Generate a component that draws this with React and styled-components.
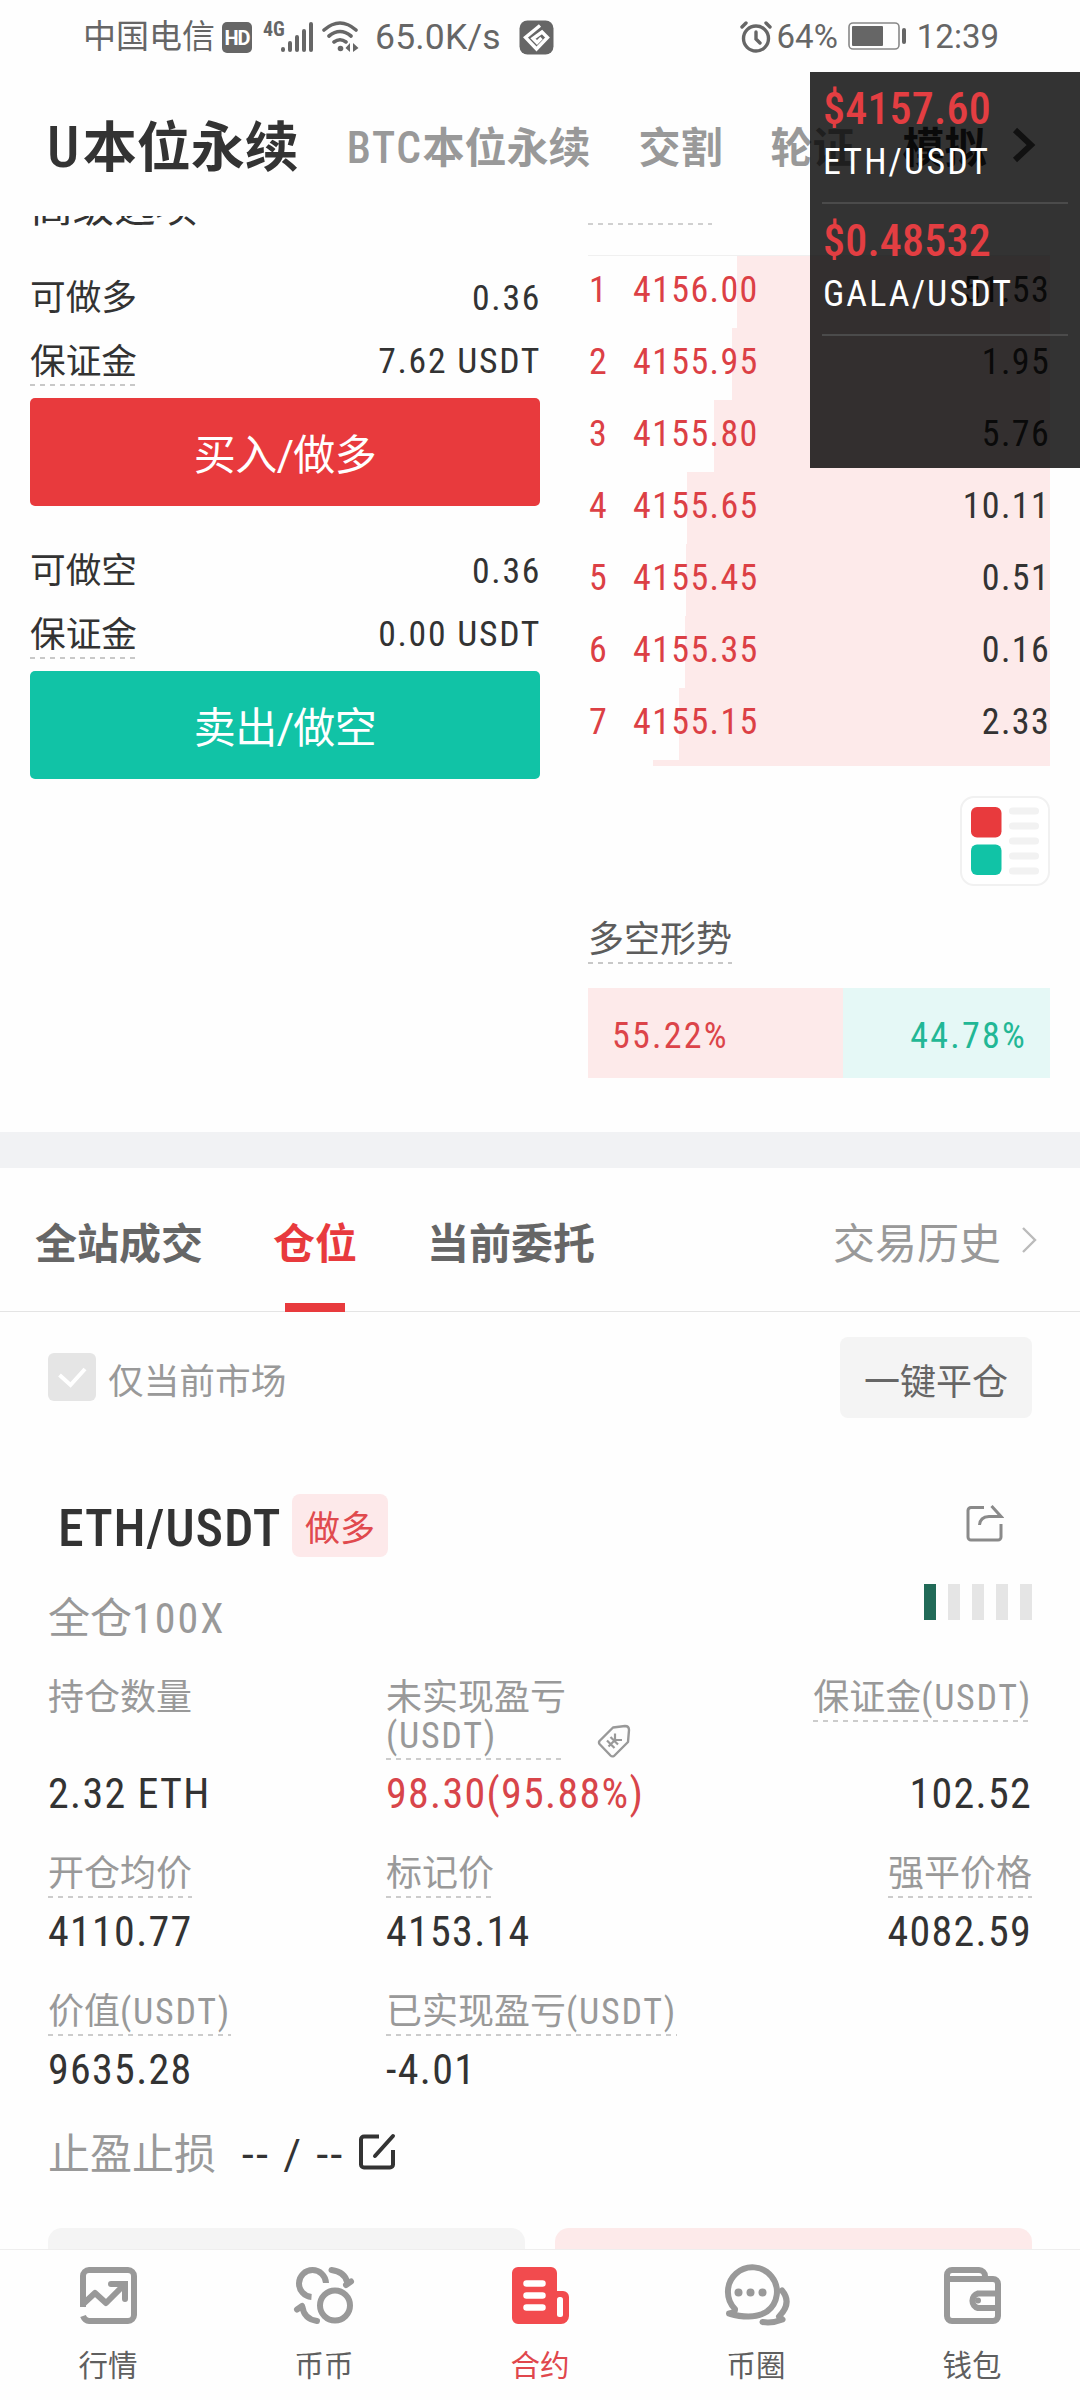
import React from 'react';
import styled, { createGlobalStyle } from 'styled-components';

const RED = '#e83a3d';
const GREEN = '#11c3a6';
const INK = '#333333';

const Global = createGlobalStyle`
  * { box-sizing: border-box; }
  body {
    margin: 0;
    background: #fefefe;
    font-family: Roboto, 'Noto Sans CJK SC', sans-serif;
    color: ${INK};
  }
`;

const Screen = styled.div`
  position: relative;
  width: 1080px;
  height: 2400px;
  overflow: hidden;
  display: flex;
  flex-direction: column;
  background: #fefefe;
`;

/* status bar */
const StatusBar = styled.header`
  height: 72px;
  flex: none;
  display: flex;
  align-items: center;
  justify-content: space-between;
  padding: 2px 81px 0 83px;
  color: #666;
`;
const StatusGroup = styled.div`
  display: flex;
  align-items: center;
`;
const StatusText = styled.span`
  font-size: ${p => p.$size}px;
  line-height: 40px;
  white-space: nowrap;
  margin-left: ${p => p.$ml || 0}px;
  letter-spacing: ${p => p.$ls || 0}px;
`;
const StatusIcon = styled.svg`
  flex: none;
  display: block;
  margin-left: ${p => p.$ml || 0}px;
  margin-bottom: ${p => p.$mb || 0}px;
`;
const HdBadge = styled.span`
  width: 30px;
  height: 31px;
  margin-left: 7px;
  border-radius: 5px;
  background: #666;
  color: #fff;
  font-size: 20px;
  font-weight: 700;
  line-height: 32px;
  text-align: center;
  letter-spacing: -1px;
`;
const NetLabel = styled.span`
  font-size: 20px;
  font-weight: 700;
  font-stretch: 75%;
  line-height: 16px;
  height: 32px;
  margin-left: 11px;
  width: 18px;
`;

/* market type tabs */
const MarketTabs = styled.nav`
  height: 144px;
  flex: none;
  display: flex;
  align-items: center;
  gap: 48px;
  padding: 9px 46px 0 47px;
`;
const MarketTab = styled.span`
  font-size: ${p => (p.$large ? 54 : 42)}px;
  line-height: 60px;
  font-weight: 700;
  white-space: nowrap;
  color: ${p => (p.$dark ? INK : '#999')};
`;
const Latin = styled.span`
  font-weight: 500;
  font-stretch: 75%;
  font-size: ${p => p.$size}px;
  letter-spacing: ${p => p.$ls || 0}px;
`;

/* trade area */
const Trade = styled.section`
  height: 916px;
  flex: none;
  display: flex;
  justify-content: space-between;
  padding: 0 30px;
  overflow: hidden;
`;
const OrderForm = styled.div`
  width: 510px;
  display: flex;
  flex-direction: column;
`;
const AdvancedLabel = styled.div`
  margin-top: -29px;
  padding-left: 1px;
  height: 79px;
  font-size: 41.5px;
  line-height: 42px;
`;
const FormRow = styled.div`
  height: 63px;
  display: flex;
  align-items: center;
  justify-content: space-between;
  font-size: 35.7px;
  line-height: 52px;
`;
const Num = styled.span`
  font-weight: 400;
  font-stretch: 75%;
  letter-spacing: 0.048em;
  margin-right: ${p => (p.$inline ? 0 : '-0.03em')};
`;
const Dashed = styled.span`
  height: 50px;
  white-space: nowrap;
  background: repeating-linear-gradient(to right, #c8c8c8 0 5px, transparent 5px 10px) left bottom / 100% 2px no-repeat;
`;
const TradeButton = styled.button`
  width: 510px;
  height: 108px;
  margin: 6px 0 ${p => p.$mb || 0}px;
  padding: 0;
  border: 0;
  border-radius: 5px;
  background: ${p => p.$bg};
  color: #fff;
  font: inherit;
  font-size: 42px;
  letter-spacing: -0.6px;
  line-height: 116px;
`;

const Book = styled.div`
  width: 462px;
  display: flex;
  flex-direction: column;
`;
const BookHead = styled.div`
  height: 40px;
  border-bottom: 1px solid #f0f0f0;
`;
const HeadDash = styled.div`
  width: 124px;
  height: 9px;
  background: repeating-linear-gradient(to right, #d0d0d0 0 5px, transparent 5px 10px) left bottom / 100% 2px no-repeat;
`;
const BookRow = styled.div`
  height: 72px;
  display: flex;
  align-items: center;
  padding: 0 1px 4px 1px;
  font-size: 36px;
  font-weight: 400;
  font-stretch: 75%;
  letter-spacing: 0.038em;
  background: linear-gradient(#fdeaea, #fdeaea) right / ${p => p.$depth}px 100% no-repeat;
`;
const BookIndex = styled.span`
  width: 44px;
  color: #dc4045;
`;
const BookPrice = styled.span`
  flex: 1;
  color: #dc4045;
`;
const BookAmount = styled.span`
  margin-right: -0.03em;
`;
const BookTail = styled.div`
  width: 397px;
  height: 6px;
  align-self: flex-end;
  background: #fdeaea;
`;
const DepthSwitch = styled.svg`
  display: block;
  align-self: flex-end;
  margin-top: 30px;
`;
const TrendLabel = styled.div`
  height: 102px;
  display: flex;
  padding-top: 28px;
  font-size: 36px;
  line-height: 53px;
  color: #5c5c5c;
`;
const TrendBar = styled.div`
  height: 90px;
  display: flex;
  font-size: 36px;
  line-height: 96px;
`;
const TrendPart = styled.div`
  width: ${p => p.$w}px;
  padding: 0 23px 0 24px;
  text-align: ${p => p.$align};
  color: ${p => p.$color};
  background: ${p => p.$bg};
  font-weight: 400;
  font-stretch: 75%;
  letter-spacing: 0.062em;
`;

const Band = styled.div`
  height: 36px;
  flex: none;
  background: #f1f2f4;
`;

/* position section */
const PanelTabs = styled.nav`
  height: 144px;
  flex: none;
  display: flex;
  gap: 70px;
  padding: 0 43px 0 35px;
  border-bottom: 1px solid #e4e4e4;
`;
const PanelTab = styled.span`
  position: relative;
  font-size: 42px;
  font-weight: 700;
  line-height: 153px;
  height: 144px;
  color: ${p => (p.$active ? RED : '#666')};
  &::after {
    content: '';
    display: ${p => (p.$active ? 'block' : 'none')};
    position: absolute;
    left: 12px;
    bottom: 0;
    width: 60px;
    height: 9px;
    background: ${RED};
  }
`;
const HistoryLink = styled.span`
  margin-left: auto;
  display: flex;
  align-items: center;
  gap: 20px;
  height: 144px;
  font-size: 42px;
  color: #999;
`;
const HistoryText = styled.span`
  padding-top: 9px;
  line-height: 50px;
`;
const FilterRow = styled.div`
  height: 131px;
  flex: none;
  display: flex;
  align-items: center;
  padding: 0 48px;
`;
const CheckBox = styled.svg`
  display: block;
  margin-bottom: 2px;
`;
const FilterLabel = styled.span`
  flex: 1;
  margin-left: 12px;
  padding-top: 8px;
  font-size: 35.7px;
  line-height: 48px;
  color: #999;
`;
const CloseAll = styled.button`
  width: 192px;
  height: 81px;
  padding: 2px 0 0;
  border: 0;
  border-radius: 8px;
  background: #f4f4f4;
  color: #666;
  font: inherit;
  font-size: 36px;
`;
const PositionHead = styled.div`
  height: 116px;
  flex: none;
  display: flex;
  align-items: center;
  padding: 49px 76px 0 58px;
`;
const Pair = styled.span`
  width: 223px;
  padding-top: 6px;
  font-size: 52px;
  font-weight: 500;
  line-height: 60px;
  font-stretch: 75%;
  letter-spacing: 0.8px;
`;
const Side = styled.span`
  width: 96px;
  height: 63px;
  margin-left: 11px;
  border-radius: 8px;
  background: #fde9ea;
  color: #e04a4e;
  font-size: 35px;
  line-height: 71px;
  text-align: center;
`;
const ShareIcon = styled.svg`
  display: block;
  margin: -3px 0 0 auto;
`;
const LeverageRow = styled.div`
  height: 116px;
  flex: none;
  display: flex;
  justify-content: space-between;
  padding: 25px 48px 0;
  font-size: 42px;
  line-height: 69px;
  color: #999;
  white-space: nowrap;
`;
const Risk = styled.div`
  display: flex;
  gap: 12px;
`;
const RiskBar = styled.span`
  width: 12px;
  height: 36px;
  background: ${p => (p.$on ? '#216a57' : '#e5e5e5')};
`;
const Stats = styled.div`
  height: 444px;
  flex: none;
  display: grid;
  grid-template-columns: 338px 1fr auto;
  grid-template-rows: 176px 138px 130px;
  padding: 0 48px;
`;
const Stat = styled.div`
  display: flex;
  flex-direction: column;
  align-items: ${p => (p.$right ? 'flex-end' : 'flex-start')};
`;
const StatLabel = styled.span`
  display: block;
  height: ${p => (p.$two ? 85 : 47)}px;
  padding-top: 4px;
  font-size: 36px;
  line-height: 38px;
  color: #999;
  white-space: pre;
  background: ${p =>
    p.$plain
      ? 'none'
      : 'repeating-linear-gradient(to right, #ccc 0 5px, transparent 5px 10px) left bottom / 100% 2px no-repeat'};
`;
const StatValue = styled.span`
  margin-top: ${p => p.$mt || 11}px;
  font-size: 42px;
  line-height: 46px;
  white-space: nowrap;
  color: ${p => p.$color || INK};
  font-weight: 400;
  font-stretch: 75%;
  letter-spacing: 0.031em;
`;
const LabelLine = styled.div`
  display: flex;
  align-items: flex-end;
  gap: 31px;
`;
const StopRow = styled.div`
  height: 109px;
  flex: none;
  display: flex;
  align-items: center;
  padding: 0 48px 38px;
  font-size: 42px;
  line-height: 50px;
  color: #999;
`;
const StopValue = styled.span`
  width: 105px;
  margin: 0 11px 0 26px;
  color: ${INK};
  letter-spacing: 2.6px;
  white-space: nowrap;
`;
const Actions = styled.div`
  height: 21px;
  flex: none;
  display: flex;
  gap: 30px;
  padding: 0 48px;
`;
const Action = styled.div`
  flex: 1;
  border-radius: 14px 14px 0 0;
  background: ${p => p.$bg};
`;

/* bottom bar */
const TabBar = styled.nav`
  flex: 1;
  display: grid;
  grid-template-columns: repeat(5, 1fr);
  border-top: 1px solid #eee;
  background: #fefefe;
`;
const TabItem = styled.div`
  display: flex;
  flex-direction: column;
  align-items: center;
  padding-top: 15px;
  font-size: 29.5px;
  line-height: 36px;
  color: ${p => (p.$active ? '#e0474c' : '#5f5f5f')};
`;
const TabIcon = styled.svg`
  display: block;
  margin-bottom: 23px;
  overflow: visible;
`;

/* floating ticker */
const Ticker = styled.aside`
  position: absolute;
  left: 810px;
  top: 72px;
  width: 270px;
  height: 396px;
  padding: 0 12px;
  background: rgba(0, 0, 0, 0.8);
`;
const TickerItem = styled.div`
  height: 132px;
  padding: 14px 1px 0;
  border-bottom: 2px solid #4b4b4b;
  display: flex;
  flex-direction: column;
`;
const TickerPrice = styled.span`
  color: #e33e42;
  font-size: 44px;
  font-weight: 500;
  line-height: 46px;
  font-stretch: 75%;
  letter-spacing: 0.2px;
`;
const TickerName = styled.span`
  margin-top: 8px;
  color: #fff;
  font-size: 36px;
  line-height: 44px;
  font-stretch: 75%;
  letter-spacing: 2.1px;
`;

const asks = [
  ['4156.00', '51.53', 313],
  ['4155.95', '1.95', 318.5],
  ['4155.80', '5.76', 336],
  ['4155.65', '10.11', 363],
  ['4155.45', '0.51', 364],
  ['4155.35', '0.16', 365],
  ['4155.15', '2.33', 371],
];

function MarketIcon() {
  return (
    <TabIcon width="60" height="60" viewBox="0 0 60 60" fill="none" stroke="#999" strokeWidth="6">
      <path d="M5 42V11a6 6 0 0 1 6-6H50a6 6 0 0 1 6 6V50a6 6 0 0 1-6 6H11q-4 0-6-5" />
      <path d="M4 40L17 28L28 38L46 20" strokeLinejoin="round" />
      <path d="M33 19H47V34" strokeLinecap="round" />
    </TabIcon>
  );
}
function CoinIcon() {
  return (
    <TabIcon width="60" height="60" viewBox="0 0 60 60" fill="none" stroke="#999" strokeWidth="6">
      <circle cx="41" cy="40.500" r="15" />
      <path d="M32 18A13.500 13.500 0 1 0 17.500 32" />
      <path d="M37.500 5Q51 7 53 17" strokeLinecap="round" />
      <path d="M52 20L57 16.500" strokeLinecap="round" />
      <path d="M23 56Q10 54 8.500 42" strokeLinecap="round" />
      <path d="M8 41L3 44.500" strokeLinecap="round" />
    </TabIcon>
  );
}
function ContractIcon() {
  return (
    <TabIcon width="60" height="60" viewBox="0 0 60 60">
      <path fill="#f24b4e" d="M8 2H41a6 6 0 0 1 6 6V26h6a6 6 0 0 1 6 6V51a8 8 0 0 1-8 8H8a6 6 0 0 1-6-6V8a6 6 0 0 1 6-6Z" />
      <g stroke="#fff" strokeLinecap="round" strokeWidth="6.500">
        <path d="M16.500 18.500H32.500M16.500 30.500H32.500M16.500 42.500H32.500" />
      </g>
      <rect x="47" y="32" width="6" height="20" rx="2.500" fill="#fff" />
    </TabIcon>
  );
}
function CircleIcon() {
  return (
    <TabIcon width="66" height="60" viewBox="0 0 66 60" fill="none" stroke="#999" strokeWidth="6" strokeLinecap="round" strokeLinejoin="round">
      <path d="M6 48.500Q12.500 47.500 12 44A24.500 24.500 0 1 1 44 46.500Q30.500 55.500 6 48.500" />
      <g fill="#999" stroke="none">
        <circle cx="15.500" cy="27.500" r="4" />
        <circle cx="27.500" cy="27.500" r="4" />
        <circle cx="39.500" cy="27.500" r="4" />
      </g>
      <path d="M59 25.500Q69.500 38 56 51.500L59.500 54.500Q49.500 58.500 39.500 57" />
    </TabIcon>
  );
}
function WalletIcon() {
  return (
    <TabIcon width="60" height="60" viewBox="0 0 60 60" fill="none" stroke="#999" strokeWidth="6">
      <path d="M5 14V51a5 5 0 0 0 5 5H51a5 5 0 0 0 5-5V19a5 5 0 0 0-5-5ZM5 14V10a5 5 0 0 1 5-5H37a6 6 0 0 1 6 6V14" />
      <path d="M56 28.500H36a7.500 7.500 0 0 0 0 14.500H56" />
      <circle cx="36" cy="35.500" r="3" fill="#999" stroke="none" />
    </TabIcon>
  );
}

const tabs = [
  ['行情', MarketIcon],
  ['币币', CoinIcon],
  ['合约', ContractIcon],
  ['币圈', CircleIcon],
  ['钱包', WalletIcon],
];

export default function App() {
  return (
    <>
      <Global />
      <Screen>
        <StatusBar>
          <StatusGroup>
            <StatusText $size={33}>中国电信</StatusText>
            <HdBadge>HD</HdBadge>
            <NetLabel>4G</NetLabel>
            <StatusIcon width="33" height="32" viewBox="0 0 33 32" stroke="#666" strokeWidth="4" strokeLinecap="round">
              <path d="M2 28V29M9 22V29M16 16V29M23 10V29M30 3V29" />
            </StatusIcon>
            <StatusIcon $ml={8} width="38" height="32" viewBox="0 0 38 32" fill="none" stroke="#666" strokeWidth="3.600" strokeLinecap="round">
              <path d="M2 9Q18 -5 34 9M7 15Q18 6 29 15M12 21Q18 16.500 24 21" />
              <circle cx="18.500" cy="27.500" r="2.800" fill="#666" stroke="none" />
              <path d="M28 22V31L23.500 27ZM31 31V22L36.500 27Z" fill="#666" stroke="none" />
            </StatusIcon>
            <StatusText $size={35.5} $ml={15} $ls={0.2}>65.0K/s</StatusText>
            <StatusIcon $ml={18} width="35" height="35" viewBox="0 0 35 35">
              <rect x="0.500" y="0.500" width="34" height="34" rx="8" fill="#666" />
              <path d="M21 5.500L6.500 17.500L17.500 29L28.500 17.500L23 12L14 18.500L18 22.500L22.500 18" fill="none" stroke="#fff" strokeWidth="3.400" />
            </StatusIcon>
          </StatusGroup>
          <StatusGroup>
            <StatusIcon width="32" height="32" viewBox="0 0 32 32" fill="none" stroke="#666" strokeWidth="3.400" strokeLinecap="round">
              <circle cx="16" cy="17.500" r="12.500" />
              <path d="M2 6L6 2M30 6L26 2M16 11V18L20 22" />
            </StatusIcon>
            <StatusText $size={33} $ml={5}>64%</StatusText>
            <StatusIcon $ml={10} width="59" height="30" viewBox="0 0 59 30">
              <rect x="1" y="1" width="50" height="26" rx="4" fill="none" stroke="#888" strokeWidth="1.600" />
              <rect x="4" y="4" width="31" height="20" rx="1" fill="#666" />
              <rect x="54" y="6" width="4" height="16" rx="2" fill="#666" />
            </StatusIcon>
            <StatusText $size={33} $ml={10}>12:39</StatusText>
          </StatusGroup>
        </StatusBar>

        <MarketTabs>
          <MarketTab $large $dark><Latin $size={57} $ls={3.5}>U</Latin>本位永续</MarketTab>
          <MarketTab><Latin $size={43.5} $ls={1.6}>BTC</Latin>本位永续</MarketTab>
          <MarketTab>交割</MarketTab>
          <MarketTab>轮证</MarketTab>
          <MarketTab $dark>模拟</MarketTab>
          <StatusIcon $ml={-26} $mb={4} width="30" height="40" viewBox="0 0 30 40" fill="none" stroke="#555" strokeWidth="6">
            <path d="M6 3L22 18L6 33" />
          </StatusIcon>
        </MarketTabs>

        <Trade>
          <OrderForm>
            <AdvancedLabel>高级选项</AdvancedLabel>
            <FormRow><span>可做多</span><Num>0.36</Num></FormRow>
            <FormRow><Dashed>保证金</Dashed><Num>7.62 USDT</Num></FormRow>
            <TradeButton $bg={RED} $mb={33}>买入/做多</TradeButton>
            <FormRow><span>可做空</span><Num>0.36</Num></FormRow>
            <FormRow><Dashed>保证金</Dashed><Num>0.00 USDT</Num></FormRow>
            <TradeButton $bg={GREEN}>卖出/做空</TradeButton>
          </OrderForm>
          <Book>
            <BookHead><HeadDash /></BookHead>
            {asks.map(([price, amount, depth], i) => (
              <BookRow key={price} $depth={depth}>
                <BookIndex>{i + 1}</BookIndex>
                <BookPrice>{price}</BookPrice>
                <BookAmount>{amount}</BookAmount>
              </BookRow>
            ))}
            <BookTail />
            <DepthSwitch width="90" height="90" viewBox="0 0 90 90">
              <rect x="1" y="1" width="88" height="88" rx="13" fill="#fff" stroke="#f1f1f1" strokeWidth="2" />
              <rect x="11" y="11" width="30.500" height="30.500" rx="6" fill={RED} />
              <rect x="11" y="48.500" width="30.500" height="30.500" rx="6" fill={GREEN} />
              <path d="M52.500 15H75.500M52.500 30H75.500M52.500 45H75.500M52.500 60H75.500M52.500 75H75.500" stroke="#f2f2f2" strokeWidth="7" strokeLinecap="round" />
            </DepthSwitch>
            <TrendLabel><Dashed>多空形势</Dashed></TrendLabel>
            <TrendBar>
              <TrendPart $w={255} $align="left" $color="#dc4449" $bg="#fdeaea">55.22%</TrendPart>
              <TrendPart $w={207} $align="right" $color="#22b795" $bg="#e5f8f6">44.78%</TrendPart>
            </TrendBar>
          </Book>
        </Trade>

        <Band />

        <PanelTabs>
          <PanelTab>全站成交</PanelTab>
          <PanelTab $active>仓位</PanelTab>
          <PanelTab>当前委托</PanelTab>
          <HistoryLink>
            <HistoryText>交易历史</HistoryText>
            <StatusIcon width="16" height="28" viewBox="0 0 16 28" fill="none" stroke="#bbb" strokeWidth="2.400">
              <path d="M2 2L14 14L2 26" />
            </StatusIcon>
          </HistoryLink>
        </PanelTabs>

        <FilterRow>
          <CheckBox width="48" height="48" viewBox="0 0 48 48">
            <rect width="48" height="48" rx="6" fill="#e5e5e5" />
            <path d="M11.500 22L22.500 32L37 16" fill="none" stroke="#fff" strokeWidth="4" />
          </CheckBox>
          <FilterLabel>仅当前市场</FilterLabel>
          <CloseAll>一键平仓</CloseAll>
        </FilterRow>

        <PositionHead>
          <Pair>ETH/USDT</Pair>
          <Side>做多</Side>
          <ShareIcon width="38" height="38" viewBox="0 0 38 38" fill="none" stroke="#8a8a8a" strokeWidth="3">
            <path d="M18 2.500H5a3 3 0 0 0-3 3V32a3 3 0 0 0 3 3H32a3 3 0 0 0 3-3V19" />
            <path d="M13.500 20Q14 12 23 11.500H35L25.500 1" />
          </ShareIcon>
        </PositionHead>

        <LeverageRow>
          <span>全仓<Num $inline>100X</Num></span>
          <Risk>
            {[1, 0, 0, 0, 0].map((on, i) => <RiskBar key={i} $on={on} />)}
          </Risk>
        </LeverageRow>

        <Stats>
          <Stat>
            <StatLabel $plain $two>持仓数量</StatLabel>
            <StatValue>2.32 ETH</StatValue>
          </Stat>
          <Stat>
            <LabelLine>
              <StatLabel $two>未实现盈亏{'\n'}<Num $inline>(USDT)</Num></StatLabel>
              <StatusIcon $mb={2} width="34" height="34" viewBox="0 0 34 34" fill="none" stroke="#999" strokeWidth="2.400" strokeLinejoin="round">
                <path d="M16 3.500L28 2Q32 2 32 6L31 18L17 32Q15 33 13.500 31.500L2.500 20Q1.500 18.500 2.500 17Z" />
                <path d="M11.500 22.500L18 16M18 16L18 9.500M18 16L25 16M10 16.500L17.500 24M13.500 13L21 20.500" strokeWidth="2.200" />
              </StatusIcon>
            </LabelLine>
            <StatValue $color="#d8454a">98.30(95.88%)</StatValue>
          </Stat>
          <Stat $right>
            <StatLabel>保证金<Num $inline>(USDT)</Num></StatLabel>
            <StatValue $mt={49}>102.52</StatValue>
          </Stat>
          <Stat><StatLabel>开仓均价</StatLabel><StatValue>4110.77</StatValue></Stat>
          <Stat><StatLabel>标记价</StatLabel><StatValue>4153.14</StatValue></Stat>
          <Stat $right><StatLabel>强平价格</StatLabel><StatValue>4082.59</StatValue></Stat>
          <Stat><StatLabel>价值<Num $inline>(USDT)</Num></StatLabel><StatValue>9635.28</StatValue></Stat>
          <Stat><StatLabel>已实现盈亏<Num $inline>(USDT)</Num></StatLabel><StatValue>-4.01</StatValue></Stat>
        </Stats>

        <StopRow>
          止盈止损
          <StopValue>-- / --</StopValue>
          <StatusIcon $mb={6} width="38" height="38" viewBox="0 0 38 38" fill="none" stroke="#333" strokeWidth="4">
            <path d="M21 3.500H6a3 3 0 0 0-3 3V31.500a3 3 0 0 0 3 3H32a3 3 0 0 0 3-3V17" />
            <path d="M17 23L35 3" strokeLinecap="round" />
          </StatusIcon>
        </StopRow>

        <Actions>
          <Action $bg="#f4f4f4" />
          <Action $bg="#fdeaea" />
        </Actions>

        <TabBar>
          {tabs.map(([label, Icon]) => (
            <TabItem key={label} $active={label === '合约'}>
              <Icon />
              {label}
            </TabItem>
          ))}
        </TabBar>

        <Ticker>
          <TickerItem>
            <TickerPrice>$4157.60</TickerPrice>
            <TickerName>ETH/USDT</TickerName>
          </TickerItem>
          <TickerItem>
            <TickerPrice>$0.48532</TickerPrice>
            <TickerName>GALA/USDT</TickerName>
          </TickerItem>
        </Ticker>
      </Screen>
    </>
  );
}
